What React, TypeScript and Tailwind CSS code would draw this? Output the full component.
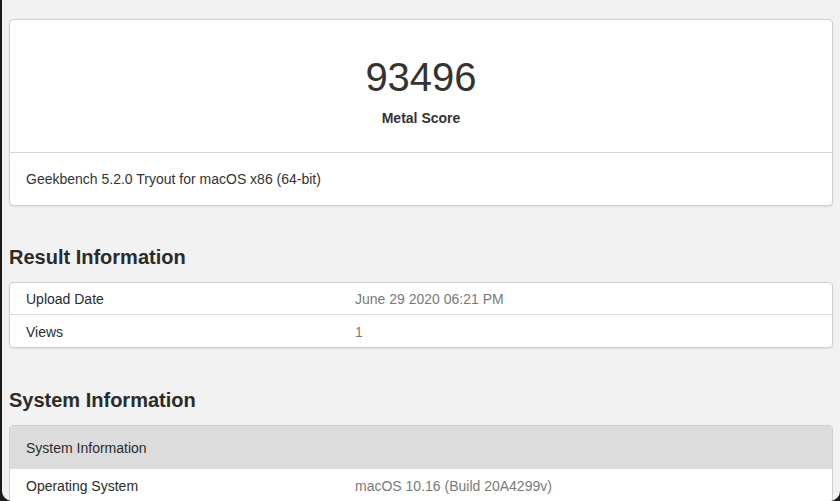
import React from 'react';

const font = { fontFamily: '"Liberation Sans", Arial, sans-serif' };

function InfoRow({ label, value, last }: { label: string; value: string; last?: boolean }) {
  return (
    <div className={`flex h-[32px] items-center px-4 pt-[2px] text-[14px] ${last ? '' : 'border-b border-[#d9d9d9]'}`}>
      <div className="w-[329px] text-[#2b2b2b]">{label}</div>
      <div className="text-[#7a7a7a]">{value}</div>
    </div>
  );
}

export default function App() {
  return (
    <div className="h-[501px] overflow-hidden bg-[#1b1b1b]" style={font}>
      <div className="ml-[2px] h-full overflow-hidden rounded-b-[10px] bg-[#f2f2f2] pl-[7px] pr-[7px] pt-[19px]">
        {/* Score card */}
        <div className="rounded-[4px] border border-[#cfcfcf] bg-white shadow-[0_1px_2px_rgba(0,0,0,0.08)]">
          <div className="flex flex-col items-center border-b border-[#d6d6d6] pt-[33px] pb-[24px]">
            <div className="text-[40px] leading-[48px] text-[#333]">93496</div>
            <div className="mt-[7px] text-[14px] leading-[20px] font-bold text-[#333]">Metal Score</div>
          </div>
          <div className="flex h-[52px] items-center px-4 text-[14px] text-[#333]">
            Geekbench 5.2.0 Tryout for macOS x86 (64-bit)
          </div>
        </div>

        {/* Result Information */}
        <h2 className="mt-[39px] mb-[13px] text-[20px] leading-[24px] font-bold text-[#2b2b2b]">Result Information</h2>
        <div className="rounded-[4px] border border-[#cfcfcf] bg-white shadow-[0_1px_2px_rgba(0,0,0,0.08)]">
          <InfoRow label="Upload Date" value="June 29 2020 06:21 PM" />
          <InfoRow label="Views" value="1" last />
        </div>

        {/* System Information */}
        <h2 className="mt-[40px] mb-[13px] text-[20px] leading-[24px] font-bold text-[#2b2b2b]">System Information</h2>
        <div className="overflow-hidden rounded-[4px] border border-[#cfcfcf] bg-white">
          <div className="flex h-[43px] items-center bg-[#dcdcdc] px-4 pt-[1px] text-[14px] text-[#2b2b2b]">System Information</div>
          <div className="flex h-[33px] items-center px-4 pt-[1px] text-[14px]">
            <div className="w-[329px] text-[#2b2b2b]">Operating System</div>
            <div className="text-[#7a7a7a]">macOS 10.16 (Build 20A4299v)</div>
          </div>
        </div>
      </div>
    </div>
  );
}
